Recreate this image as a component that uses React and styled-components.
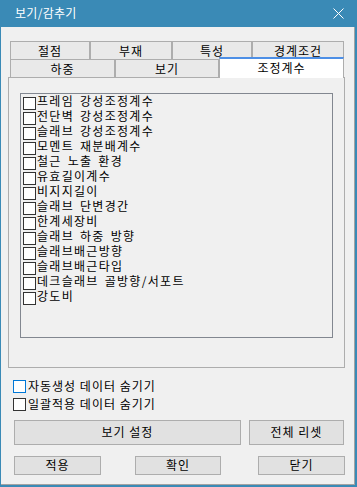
import React from "react";
import styled, { createGlobalStyle } from "styled-components";

const Global = createGlobalStyle`
  html, body { margin: 0; padding: 0; background: #3a8ab6; }
  body { font-family: "Noto Sans CJK KR", "Noto Sans", sans-serif; font-size: 12px; color: #000; letter-spacing: 1px; }
  * { box-sizing: border-box; }
`;

const Window = styled.div`
  width: 357px;
  height: 487px;
  background: #3a8ab6;
  display: flex;
  flex-direction: column;
  padding: 0 2px 2px 1px;
`;

const TitleBar = styled.div`
  height: 27px;
  flex: none;
  display: flex;
  align-items: center;
  justify-content: space-between;
  padding: 0 11px 0 14px;
  color: #fff;
  font-size: 12px;
  letter-spacing: 0.3px;
`;

const Title = styled.span`
  line-height: 1;
  margin-top: -2px;
`;

const Client = styled.div`
  flex: 1;
  background: #f0f0f0;
  border-right: 1px solid #a3a3a3;
  border-bottom: 1px solid #a3a3a3;
  display: flex;
  flex-direction: column;
  padding: 14px 10px 0 7px;
`;

const TabRow = styled.div`
  display: flex;
  height: 18px;
  margin: 0 1px 0 2px;
  align-items: flex-end;
`;

const Tab = styled.div`
  width: ${(p) => p.$w}px;
  height: 18px;
  flex: none;
  background: #e9e9e9;
  border: 1px solid #adadad;
  border-bottom: none;
  display: flex;
  align-items: center;
  justify-content: center;
  line-height: 1;
  padding-top: 1px;
`;

const ActiveTab = styled(Tab)`
  position: relative;
  z-index: 1;
  height: 21px;
  margin-bottom: -1px;
  margin-top: -2px;
  background: #fff;
  border-top: 2px solid #4d8fe6;
  padding-top: 0;
  padding-bottom: 2px;
`;

const Panel = styled.div`
  width: 337px;
  height: 291px;
  border: 1px solid #adadad;
  background: #f0f0f0;
  padding: 15px 11px 0 11px;
`;

const List = styled.div`
  width: 313px;
  height: 245px;
  border: 1px solid #828790;
  background: #f0f0f0;
  padding: 0 0 0 2px;
  display: flex;
  flex-direction: column;
`;

const ListItem = styled.div`
  height: 15px;
  display: flex;
  align-items: flex-start;
  white-space: nowrap;
  letter-spacing: 1.3px;
  word-spacing: 2px;
`;

const Box = styled.span`
  width: 13px;
  height: 13px;
  flex: none;
  background: #fff;
  border: 1px solid ${(p) => (p.$focus ? "#0078d7" : "#333")};
  margin-top: ${(p) => p.$mt ?? 3}px;
`;

const ItemLabel = styled.span`
  line-height: 14px;
  margin-left: 1px;
`;

const Options = styled.div`
  display: flex;
  flex-direction: column;
  gap: 5px;
  margin: 12px 0 0 5px;
`;

const Option = styled.div`
  height: 13px;
  display: flex;
  align-items: center;
  white-space: nowrap;
`;

const OptionLabel = styled.span`
  margin-left: 2px;
  line-height: 13px;
  margin-top: -3px;
`;

const ButtonRow = styled.div`
  display: flex;
  margin: ${(p) => p.$m};
  gap: ${(p) => p.$gap || 0}px;
`;

const Button = styled.div`
  width: ${(p) => p.$w}px;
  height: ${(p) => p.$h}px;
  flex: none;
  margin-left: ${(p) => p.$ml || 0}px;
  background: #e1e1e1;
  border: 1px solid #adadad;
  display: flex;
  align-items: center;
  justify-content: center;
  line-height: 1;
  padding-bottom: 1px;
`;

const items = [
  "프레임 강성조정계수",
  "전단벽 강성조정계수",
  "슬래브 강성조정계수",
  "모멘트 재분배계수",
  "철근 노출 환경",
  "유효길이계수",
  "비지지길이",
  "슬래브 단변경간",
  "한계세장비",
  "슬래브 하중 방향",
  "슬래브배근방향",
  "슬래브배근타입",
  "데크슬래브 골방향/서포트",
  "강도비",
];

export default function App() {
  return (
    <>
      <Global />
      <Window>
        <TitleBar>
          <Title>보기/감추기</Title>
          <svg width="11" height="11" viewBox="0 0 11 11">
            <path d="M0.5 0.5 L10.5 10.5 M10.5 0.5 L0.5 10.5" stroke="#fff" strokeWidth="1" />
          </svg>
        </TitleBar>
        <Client>
          <TabRow>
            <Tab $w={80}>절점</Tab>
            <Tab $w={82}>부재</Tab>
            <Tab $w={80}>특성</Tab>
            <Tab $w={92}>경계조건</Tab>
          </TabRow>
          <TabRow>
            <Tab $w={105}>하중</Tab>
            <Tab $w={104}>보기</Tab>
            <ActiveTab $w={125}>조정계수</ActiveTab>
          </TabRow>
          <Panel>
            <List>
              {items.map((t) => (
                <ListItem key={t}>
                  <Box />
                  <ItemLabel>{t}</ItemLabel>
                </ListItem>
              ))}
            </List>
          </Panel>
          <Options>
            <Option>
              <Box $focus $mt={0} />
              <OptionLabel>자동생성 데이터 숨기기</OptionLabel>
            </Option>
            <Option>
              <Box $mt={0} />
              <OptionLabel>일괄적용 데이터 숨기기</OptionLabel>
            </Option>
          </Options>
          <ButtonRow $m="9px 0 0 6px" $gap={8}>
            <Button $w={227} $h={25}>보기 설정</Button>
            <Button $w={95} $h={25}>전체 리셋</Button>
          </ButtonRow>
          <ButtonRow $m="11px 0 0 6px">
            <Button $w={87} $h={19}>적용</Button>
            <Button $w={86} $h={19} $ml={34}>확인</Button>
            <Button $w={87} $h={19} $ml={37}>닫기</Button>
          </ButtonRow>
        </Client>
      </Window>
    </>
  );
}
